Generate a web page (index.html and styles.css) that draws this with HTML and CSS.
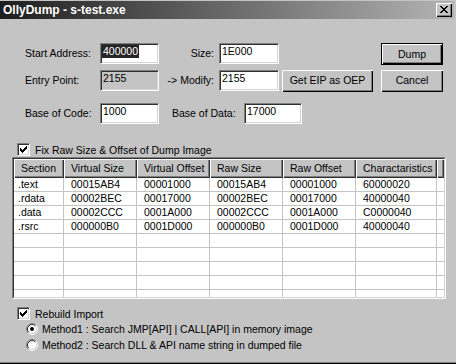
FILE: index.html
```html
<!doctype html>
<html lang="en">
    <head>
        <meta charset="UTF-8" />
        <title>OllyDump - s-test.exe</title>
        <link rel="stylesheet" href="styles.css">
    </head>
    <body>
        <div class="window">
            <div class="titlebar">
                <span class="title">OllyDump - s-test.exe</span>
                <span class="close">
                    <svg width="8" height="7" viewBox="0 0 8 7" shape-rendering="crispEdges">
                        <path fill="#000" d="M0 0h2v1H0zM6 0h2v1H6zM1 1h2v1H1zM5 1h2v1H5zM2 2h4v1H2zM3 3h2v1H3zM2 4h4v1H2zM1 5h2v1H1zM5 5h2v1H5zM0 6h2v1H0zM6 6h2v1H6z"/>
                    </svg>
                </span>
            </div>

            <div class="content">
                <div class="row row1">
                    <span class="lbl">Start Address:</span>
                    <div class="edit"><span class="sel">400000</span></div>
                    <span class="lbl2">Size:</span>
                    <div class="edit wide">1E000</div>
                    <div class="spacer"></div>
                    <div class="btn default side">Dump</div>
                </div>

                <div class="row row2">
                    <span class="lbl">Entry Point:</span>
                    <div class="edit disabled">2155</div>
                    <span class="lbl2">-&gt; Modify:</span>
                    <div class="edit wide">2155</div>
                    <div class="btn eip">Get EIP as OEP</div>
                    <div class="btn side">Cancel</div>
                </div>

                <div class="row row3">
                    <span class="lbl">Base of Code:</span>
                    <div class="edit">1000</div>
                    <span class="lbl3">Base of Data:</span>
                    <div class="edit data">17000</div>
                </div>

                <div class="check fix">
                    <span class="box">
                        <svg width="13" height="13" viewBox="0 0 13 13" shape-rendering="crispEdges">
                            <path fill="#000" d="M9 3h1v1H9zM8 4h2v1H8zM3 5h1v1H3zM7 5h3v1H7zM3 6h2v1H3zM6 6h3v1H6zM3 7h5v1H3zM4 8h3v1H4zM5 9h1v1H5z"/>
                        </svg>
                    </span>
                    <span>Fix Raw Size &amp; Offset of Dump Image</span>
                </div>

                <div class="list">
                    <div class="list-inner">
                        <div class="cols head">
                            <div>Section</div>
                            <div>Virtual Size</div>
                            <div>Virtual Offset</div>
                            <div>Raw Size</div>
                            <div>Raw Offset</div>
                            <div>Charactaristics</div>
                            <div></div>
                        </div>
                        <div class="rows">
                            <div class="cols item">
                                <div>.text</div><div>00015AB4</div><div>00001000</div><div>00015AB4</div><div>00001000</div><div>60000020</div><div></div>
                            </div>
                            <div class="cols item">
                                <div>.rdata</div><div>00002BEC</div><div>00017000</div><div>00002BEC</div><div>00017000</div><div>40000040</div><div></div>
                            </div>
                            <div class="cols item">
                                <div>.data</div><div>00002CCC</div><div>0001A000</div><div>00002CCC</div><div>0001A000</div><div>C0000040</div><div></div>
                            </div>
                            <div class="cols item">
                                <div>.rsrc</div><div>000000B0</div><div>0001D000</div><div>000000B0</div><div>0001D000</div><div>40000040</div><div></div>
                            </div>
                            <div class="cols item"><div></div><div></div><div></div><div></div><div></div><div></div><div></div></div>
                            <div class="cols item"><div></div><div></div><div></div><div></div><div></div><div></div><div></div></div>
                            <div class="cols item"><div></div><div></div><div></div><div></div><div></div><div></div><div></div></div>
                            <div class="cols item"><div></div><div></div><div></div><div></div><div></div><div></div><div></div></div>
                            <div class="cols item"><div></div><div></div><div></div><div></div><div></div><div></div><div></div></div>
                        </div>
                    </div>
                </div>

                <div class="check rebuild">
                    <span class="box">
                        <svg width="13" height="13" viewBox="0 0 13 13" shape-rendering="crispEdges">
                            <path fill="#000" d="M9 3h1v1H9zM8 4h2v1H8zM3 5h1v1H3zM7 5h3v1H7zM3 6h2v1H3zM6 6h3v1H6zM3 7h5v1H3zM4 8h3v1H4zM5 9h1v1H5z"/>
                        </svg>
                    </span>
                    <span>Rebuild Import</span>
                </div>

                <div class="radio first">
                    <svg width="12" height="12" viewBox="0 0 12 12">
                        <circle cx="6" cy="6" r="4.5" fill="#fff"/>
                        <path d="M2.11 9.89A5.5 5.5 0 0 1 9.89 2.11" fill="none" stroke="#808080"/>
                        <path d="M9.89 2.11A5.5 5.5 0 0 1 2.11 9.89" fill="none" stroke="#fff"/>
                        <path d="M2.82 9.18A4.5 4.5 0 0 1 9.18 2.82" fill="none" stroke="#303030"/>
                        <path d="M9.18 2.82A4.5 4.5 0 0 1 2.82 9.18" fill="none" stroke="#d4d4d4"/>
                        <circle cx="6" cy="6" r="2" fill="#000"/>
                    </svg>
                    <span>Method1 : Search JMP[API] | CALL[API] in memory image</span>
                </div>

                <div class="radio">
                    <svg width="12" height="12" viewBox="0 0 12 12">
                        <circle cx="6" cy="6" r="4.5" fill="#fff"/>
                        <path d="M2.11 9.89A5.5 5.5 0 0 1 9.89 2.11" fill="none" stroke="#808080"/>
                        <path d="M9.89 2.11A5.5 5.5 0 0 1 2.11 9.89" fill="none" stroke="#fff"/>
                        <path d="M2.82 9.18A4.5 4.5 0 0 1 9.18 2.82" fill="none" stroke="#303030"/>
                        <path d="M9.18 2.82A4.5 4.5 0 0 1 2.82 9.18" fill="none" stroke="#d4d4d4"/>
                    </svg>
                    <span>Method2 : Search DLL &amp; API name string in dumped file</span>
                </div>
            </div>
        </div>
    </body>
</html>
```

FILE: styles.css
```css
* {
    margin: 0;
    padding: 0;
    box-sizing: border-box;
}
body {
    width: 456px;
    height: 364px;
    overflow: hidden;
    background: #c4c4c4;
    font-family: "Liberation Sans", Arial, sans-serif;
    font-size: 10.5px;
    color: #000;
}

.window {
    height: 364px;
    padding-top: 1px;
    border-bottom: 1px solid #000;
    box-shadow: inset 0 -1px #808080;
}

.titlebar {
    height: 18px;
    margin-right: 2px;
    padding: 0 2px 0 3px;
    display: flex;
    align-items: center;
    justify-content: space-between;
    background: linear-gradient(to right, #1e1e1e, #b4b4b4);
}
.title {
    color: #fff;
    font-weight: bold;
    font-size: 12px;
    line-height: 18px;
}
.close {
    width: 16px;
    height: 14px;
    padding: 3px 0 0 4px;
    background: #c4c4c4;
    box-shadow: inset 1px 1px #fff, inset -1px -1px #000,
        inset -2px -2px #808080;
}
.close svg {
    display: block;
}

.content {
    padding-left: 12px;
}

/* address fields */
.row {
    display: flex;
    height: 22px;
    margin-left: 13px;
}
.row1 {
    margin-top: 24px;
}
.row2 {
    margin-top: 5px;
}
.row3 {
    margin-top: 11px;
}
.lbl {
    width: 75px;
    line-height: 21px;
}
.lbl2 {
    width: 60px;
    padding-right: 5px;
    text-align: right;
    line-height: 21px;
}
.lbl3 {
    width: 72px;
    margin-left: 13px;
    line-height: 21px;
}
.edit {
    width: 59px;
    height: 21px;
    padding: 0 1px;
    line-height: 13px;
    background: #fff;
    border: 1px solid;
    border-color: #808080 #fff #fff #808080;
    box-shadow: inset 1px 1px #303030, inset -1px -1px #d4d4d4;
    padding-left: 2px;
    padding-top: 1px;
}
.edit.wide {
    width: 60px;
}
.edit.data {
    width: 58px;
}
.edit.disabled {
    background: #c4c4c4;
}
.sel {
    display: inline-block;
    margin-left: -1px;
    padding: 0 1px;
    background: #262626;
    color: #fff;
}
.spacer {
    width: 94px;
}

.btn {
    height: 22px;
    line-height: 21px;
    text-align: center;
    background: #c4c4c4;
    box-shadow: inset 1px 1px #fff, inset -1px -1px #000,
        inset -2px -2px #808080;
}
.btn.eip {
    width: 91px;
    margin-left: 3px;
}
.btn.side {
    width: 62px;
    margin-left: 8px;
}
.btn.default {
    border: 1px solid #000;
    line-height: 20px;
}

/* checkboxes and radios */
.check {
    display: flex;
    align-items: center;
    gap: 5px;
    height: 13px;
    margin-left: 5px;
}
.check.fix {
    margin-top: 18px;
}
.check.rebuild {
    margin-top: 8px;
}
.box {
    width: 13px;
    height: 13px;
    background: #fff;
    border: 1px solid;
    border-color: #808080 #fff #fff #808080;
    box-shadow: inset 1px 1px #303030, inset -1px -1px #d4d4d4;
}
.box svg {
    display: block;
    margin: -1px;
}
.radio {
    display: flex;
    align-items: center;
    gap: 4px;
    height: 12px;
    margin-top: 4px;
    margin-left: 14px;
}
.radio.first {
    margin-top: 3px;
}
.radio svg {
    display: block;
}

/* section list */
.list {
    width: 434px;
    height: 142px;
    margin-top: 1px;
    border: 1px solid;
    border-color: #808080 #fff #fff #808080;
}
.list-inner {
    height: 100%;
    background: #fff;
    border: 1px solid;
    border-color: #303030 #d4d4d4 #d4d4d4 #303030;
    overflow: hidden;
}
.cols {
    display: grid;
    grid-template-columns: 50px 73px 73px 73px 73px 81px 1fr;
}
.head {
    height: 19px;
}
.head div {
    padding-left: 7px;
    line-height: 19px;
    background: #c4c4c4;
    box-shadow: inset 1px 1px #fff, inset -1px -1px #303030,
        inset -2px -2px #808080;
    white-space: nowrap;
    overflow: hidden;
}
.item {
    height: 14px;
}
.item div {
    padding-left: 7px;
    line-height: 13px;
    border-right: 1px solid #c4c4c4;
    border-bottom: 1px solid #c4c4c4;
    white-space: nowrap;
}
.item div:first-child {
    padding-left: 4px;
}
.item div:last-child {
    width: 4px;
}
```
